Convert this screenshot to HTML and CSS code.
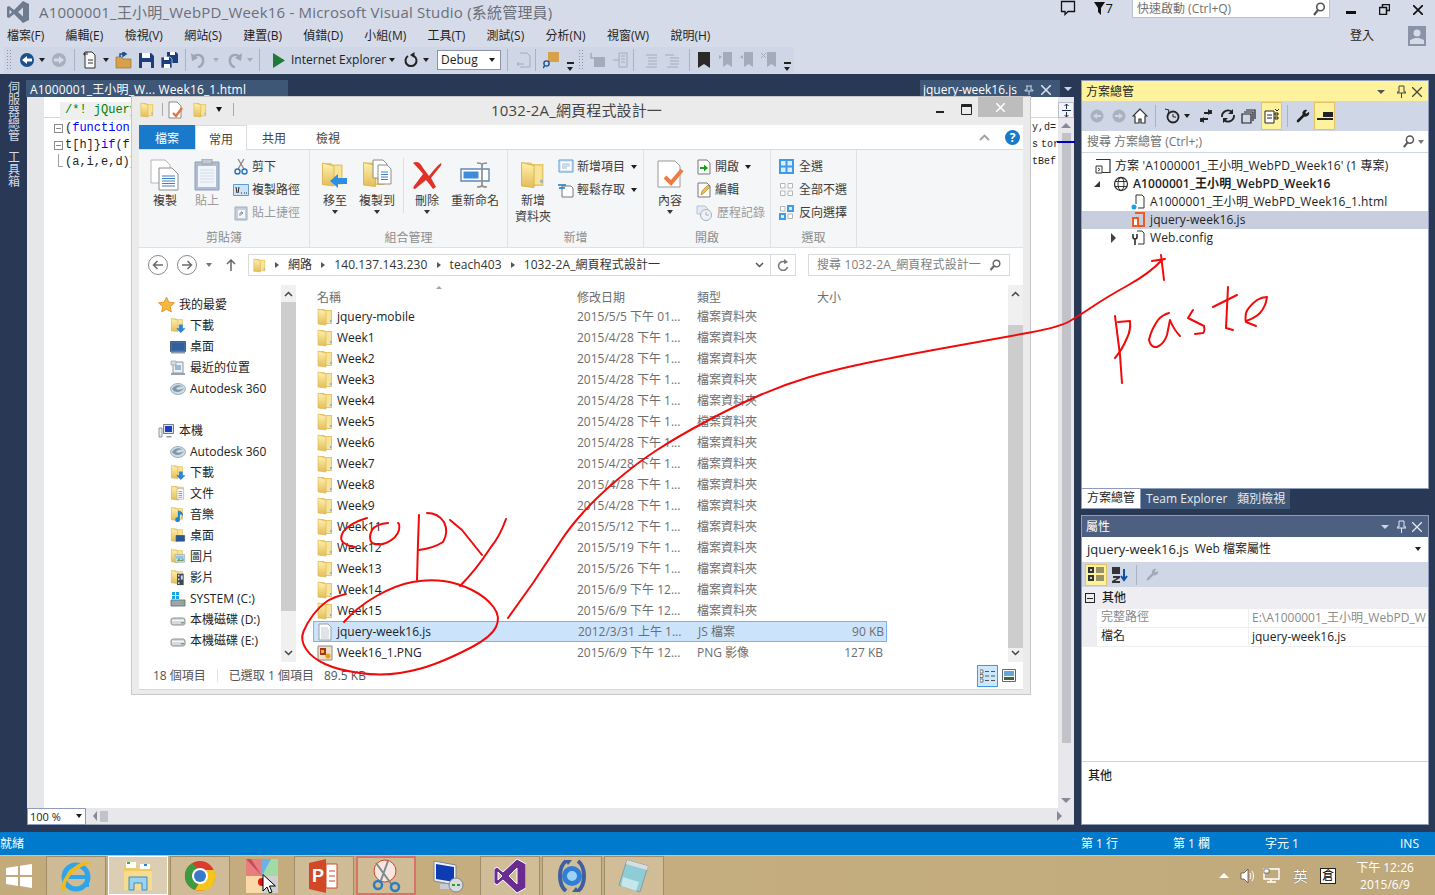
FILE: index.html
```html
<!DOCTYPE html>
<html lang="zh-Hant">
<head>
<meta charset="utf-8">
<title>A1000001_王小明_WebPD_Week16 - Microsoft Visual Studio</title>
<link rel="stylesheet" href="styles.css">
</head>
<body>
<svg class="defs" width="0" height="0" aria-hidden="true">
  <defs>
    <linearGradient id="gf" x1="0" y1="0" x2="0" y2="1"><stop offset="0" stop-color="#fff1ad"/><stop offset="1" stop-color="#e3bd58"/></linearGradient>
    <symbol id="folder" viewBox="0 0 16 18">
      <path d="M1 1h6l1 1h7v14H1z" fill="#e9c766"/>
      <path d="M9 3h5v12H9z" fill="#f8e39a"/>
      <path d="M1 1l8 2v14l-8-1z" fill="url(#gf)" stroke="#d8b24f" stroke-width=".6"/>
      <path d="M13 12h1.500v2H13z" fill="#7fb2d9"/>
    </symbol>
    <symbol id="page" viewBox="0 0 16 18">
      <path d="M2 1h9l3 3v13H2z" fill="#fdfdfd" stroke="#9aa0a8"/>
      <path d="M4 5h7M4 7h8M4 9h8M4 11h8M4 13h8M4 15h8" stroke="#c2c8d2"/>
    </symbol>
    <symbol id="png" viewBox="0 0 16 18">
      <path d="M1 2h14v14H1z" fill="#f0e2c4" stroke="#8a8a8a"/>
      <path d="M3 4h6v7H3z" fill="#a3341e"/>
      <circle cx="11" cy="12" r="2.600" fill="#e0a21b"/>
      <path d="M4 6h3v3H4z" fill="#f1b13a"/>
    </symbol>
    <symbol id="dl" viewBox="0 0 16 18">
      <use href="#folder" width="14" height="17"/>
      <path d="M9 8h4v4h3l-5 5-5-5h3z" fill="#2a86d8"/>
    </symbol>
    <symbol id="desk" viewBox="0 0 16 16">
      <path d="M.5 2.500h15v10H.5z" fill="#3d6ca6" stroke="#4d5d74"/>
      <path d="M2 4h12v7H2z" fill="#2f5f9f"/>
      <path d="M1 13.500h14" stroke="#8d99a8" stroke-width="2"/>
    </symbol>
    <symbol id="recent" viewBox="0 0 16 16">
      <path d="M3 2h10v11H3z" fill="#eef1f4" stroke="#8b96a3"/>
      <path d="M5 5h6v5H5z" fill="#9bb9d4"/>
      <path d="M1 14h14" stroke="#9aa3ad" stroke-width="2"/>
      <path d="M1 1h5v4H1z" fill="#d9dde2" stroke="#8b96a3" stroke-width=".6"/>
    </symbol>
    <symbol id="adesk" viewBox="0 0 16 16">
      <ellipse cx="8" cy="8" rx="7.500" ry="5.500" fill="#cfdbe2" stroke="#9db2bf"/>
      <path d="M2 8c2-4 8-5 11-2-3-1-6 0-7 2 2 1 5 1 8-1-2 4-9 6-12 1z" fill="#7d98a8"/>
    </symbol>
    <symbol id="pc" viewBox="0 0 16 16">
      <path d="M5 1.500h10v9H5z" fill="#dfe6ee" stroke="#6f7d8d"/>
      <path d="M6.500 3h7v6h-7z" fill="#1c3fc2"/>
      <path d="M8 13h5v1.500H8z" fill="#8d99a8"/>
      <path d="M.500 5h3v9h-3z" fill="#e8ebee" stroke="#77818d" stroke-width=".8"/>
    </symbol>
    <symbol id="docf" viewBox="0 0 16 18">
      <use href="#folder" width="15" height="17"/>
      <path d="M7 4h7v11H7z" fill="#fff" stroke="#9aa6b2" stroke-width=".6"/>
      <path d="M8.500 7h4M8.500 9h4M8.500 11h4M8.500 13h4" stroke="#7c96b6"/>
    </symbol>
    <symbol id="musf" viewBox="0 0 16 18">
      <use href="#folder" width="14" height="17"/>
      <path d="M10 5v9a2.500 2.500 0 1 1-2-2V5z" fill="#1e83d0"/>
      <path d="M10 5c2 1 4 3 3 6-1-2-2-2-3-2z" fill="#1e83d0"/>
    </symbol>
    <symbol id="deskf" viewBox="0 0 16 18">
      <use href="#folder" width="14" height="17"/>
      <path d="M6 9h9v6H6z" fill="#23589c" stroke="#3c4a5c" stroke-width=".7"/>
    </symbol>
    <symbol id="picf" viewBox="0 0 16 18">
      <use href="#folder" width="14" height="17"/>
      <path d="M5 7h10v8H5z" fill="#f4f7f8" stroke="#8a97a4" stroke-width=".7"/>
      <path d="M6 8h8v4H6z" fill="#8ec4dd"/><path d="M6 14l3-3 2 2 3-2v3z" fill="#6ea15a"/>
    </symbol>
    <symbol id="vidf" viewBox="0 0 16 18">
      <use href="#folder" width="14" height="17"/>
      <path d="M7 5h7v12H7z" fill="#3f4a55"/>
      <path d="M8 6h1.500v2H8zM8 10h1.500v2H8zM8 14h1.500v2H8zM11 7h2v4h-2z" fill="#cfe3ee"/>
    </symbol>
    <symbol id="sysd" viewBox="0 0 16 16">
      <path d="M1 9h14v6H1z" fill="#9ea7ad" stroke="#5d666d" stroke-width=".8"/>
      <path d="M11 11h3v2h-3z" fill="#72c04c"/>
      <path d="M2 1h3v3H2zM6 1h3v3H6zM2 5h3v3H2zM6 5h3v3H6z" fill="#13a7e8"/>
    </symbol>
    <symbol id="drive" viewBox="0 0 16 16">
      <path d="M1 8c0-2 2-2 3-2h8c1 0 3 0 3 2v3c0 2-2 2-3 2H4c-1 0-3 0-3-2z" fill="#d6dadd" stroke="#6e767d" stroke-width=".8"/>
      <path d="M2 8.500h12" stroke="#f6f7f8"/><path d="M11 10h3v1.500h-3z" fill="#8fa06f"/>
    </symbol>
    <symbol id="star" viewBox="0 0 16 16">
      <path d="M8 1l2.200 4.800 5.300.6-4 3.500 1.100 5.100L8 12.400 3.400 15l1.100-5.100-4-3.500 5.300-.6z" fill="#f6b942" stroke="#e08a23" stroke-width=".8"/>
    </symbol>
    <symbol id="tb-wrench" viewBox="0 0 16 16">
      <path d="M13 1a4 4 0 0 0-5 5L2 12v2h2l6-6a4 4 0 0 0 5-5l-3 2-1-1z" fill="currentColor"/>
    </symbol>
  </defs>
</svg>

<div class="desktop">
  <header class="titlebar">
    <svg class="vs-logo" width="24" height="24" viewBox="0 0 24 24"><path d="M17 1l6 3v16l-6 3-9-9-5 4-2-1V7l2-1 5 4zM17 7.500L12 12l5 4.500zM3.500 9.500v5L6 12z" fill="#6e7b8f"/></svg>
    <span class="app-title">A1000001_王小明_WebPD_Week16 - Microsoft Visual Studio (系統管理員)</span>
    <span class="flex-fill"></span>
    <svg class="ti-comment" width="16" height="16" viewBox="0 0 16 16"><path d="M1.500 1.500h13v10H8l-3 3v-3H1.500z" fill="none" stroke="#111" stroke-width="1.300"/></svg>
    <span class="filter-count"><svg width="11" height="13" viewBox="0 0 11 13"><path d="M0 0h11L7 6v7L4 10V6z" fill="#111"/></svg>7</span>
    <div class="quick"><span>快速啟動 (Ctrl+Q)</span>
      <svg width="14" height="14" viewBox="0 0 14 14"><circle cx="8.500" cy="5" r="3.800" fill="none" stroke="#555" stroke-width="1.600"/><path d="M6 8l-4 5" stroke="#555" stroke-width="2.200"/></svg>
    </div>
    <div class="winbtns">
      <svg width="10" height="10" viewBox="0 0 10 10"><path d="M0 6h10v3H0z" fill="#111"/></svg>
      <svg width="11" height="11" viewBox="0 0 11 11"><path d="M3.500 3V.500h7v6H8M.500 3.500h7v7h-7z" fill="none" stroke="#111" stroke-width="1.500"/></svg>
      <svg width="10" height="10" viewBox="0 0 10 10"><path d="M0 0l10 10M10 0L0 10" stroke="#111" stroke-width="1.700"/></svg>
    </div>
  </header>

  <nav class="menubar">
    <div class="menus">
      <span>檔案(F)</span><span>編輯(E)</span><span>檢視(V)</span><span>網站(S)</span><span>建置(B)</span><span>偵錯(D)</span><span>小組(M)</span><span>工具(T)</span><span>測試(S)</span><span>分析(N)</span><span>視窗(W)</span><span>說明(H)</span>
    </div>
    <span class="signin">登入</span>
    <span class="avatar"><svg width="18" height="20" viewBox="0 0 18 20"><path d="M0 0h18v20H0z" fill="#8a94a8"/><circle cx="9" cy="7" r="3.500" fill="#d6dbe9"/><path d="M2 18v-4l5-2h4l5 2v4z" fill="#d6dbe9"/></svg></span>
  </nav>

  <div class="toolbar">
    <span class="grip"></span>
    <svg class="ml7" width="16" height="16" viewBox="0 0 16 16"><circle cx="8" cy="8" r="7" fill="#1b4f8e"/><path d="M3 8l5-4v2.500h5v3H8V12z" fill="#fff"/></svg>
    <i class="caret ml4"></i>
    <svg class="ml6" width="16" height="16" viewBox="0 0 16 16"><circle cx="8" cy="8" r="7" fill="#a9afbc"/><path d="M13 8L8 4v2.500H3v3h5V12z" fill="#d6dbe9"/></svg>
    <i class="tsep ml7"></i>
    <svg class="ml7" width="16" height="18" viewBox="0 0 16 18"><path d="M3 1h7l3 3v13H3z" fill="#f6f6f6" stroke="#333"/><path d="M1 3h3M2.500 1.500v3M5 1v3" stroke="#333"/><path d="M6 9h5M6 12h5" stroke="#333"/></svg>
    <i class="caret ml5"></i>
    <svg class="ml6" width="17" height="17" viewBox="0 0 17 17"><path d="M1 5h6l1 2h8v9H1z" fill="#d7a04a" stroke="#8a6a2a" stroke-width=".6"/><path d="M5 5V2h5M8 0l3 2-3 2z" fill="none" stroke="#1b4f8e" stroke-width="1.500"/></svg>
    <svg class="ml7" width="15" height="15" viewBox="0 0 15 15"><path d="M0 0h12l3 3v12H0z" fill="#1b3f7e"/><path d="M3 0h8v5H3z" fill="#fff"/><path d="M3 9h9v6H3z" fill="#d6dbe9"/></svg>
    <svg class="ml7" width="17" height="16" viewBox="0 0 17 16"><path d="M6 0h9l2 2v9H6z" fill="#1b3f7e"/><path d="M0 5h9l2 2v9H0z" fill="#1b3f7e" stroke="#d6dbe9" stroke-width=".7"/><path d="M3 5h5v3H3zM3 12h6v4H3zM9 0h5v3H9z" fill="#fff"/></svg>
    <i class="tsep ml7"></i>
    <svg class="ml4" width="16" height="16" viewBox="0 0 16 16"><path d="M3 5c5-4 11-2 10 5-.5 3-3 5-5 5" fill="none" stroke="#9ea6b6" stroke-width="2.400"/><path d="M1 1l1 8 6-3z" fill="#9ea6b6"/></svg>
    <i class="caret caret-off ml7"></i>
    <svg class="ml8" width="16" height="16" viewBox="0 0 16 16"><path d="M13 5C8 1 2 3 3 10c.5 3 3 5 5 5" fill="none" stroke="#9ea6b6" stroke-width="2.400"/><path d="M15 1l-1 8-6-3z" fill="#9ea6b6"/></svg>
    <i class="caret caret-off ml4"></i>
    <i class="tsep ml6"></i>
    <svg class="ml12" width="14" height="15" viewBox="0 0 14 15"><path d="M1 0l12 7.500L1 15z" fill="#1f7a38"/></svg>
    <span class="ie-label">Internet Explorer</span>
    <i class="caret ml4"></i>
    <svg class="ml9" width="14" height="16" viewBox="0 0 14 16"><path d="M4 4a5.500 5.500 0 1 0 6 0" fill="none" stroke="#222" stroke-width="2"/><path d="M10.500 0v6L6 3z" fill="#222"/></svg>
    <i class="caret ml5"></i>
    <span class="debug-box">Debug<i class="caret"></i></span>
    <i class="tsep ml6"></i>
    <svg class="ml8" width="15" height="17" viewBox="0 0 15 17"><path d="M4 1h7l3 3v11H4" fill="none" stroke="#a4acbb"/><path d="M1 12h7M3 10l-2 2 2 2" fill="none" stroke="#a4acbb"/></svg>
    <i class="tsep ml4"></i>
    <svg class="ml7" width="16" height="18" viewBox="0 0 16 18"><path d="M5 1h11v10H5z" fill="#d7a04a"/><circle cx="3.500" cy="12.500" r="2.600" fill="none" stroke="#1b4f8e" stroke-width="1.400"/><path d="M1.500 15l-1.500 2" stroke="#1b4f8e" stroke-width="1.500"/></svg>
    <span class="overflow ml8"></span>
    <span class="grip ml4"></span>
    <svg class="ml6" width="16" height="16" viewBox="0 0 16 16"><path d="M4 5h11v10H4z" fill="#a4acbb"/><path d="M1 1v5h5" fill="none" stroke="#a4acbb" stroke-width="1.500"/></svg>
    <svg class="ml6" width="16" height="16" viewBox="0 0 16 16"><path d="M7 1h8v14H7z" fill="none" stroke="#a4acbb"/><path d="M9 4h4M9 7h4M9 10h4M1 8h6" stroke="#a4acbb"/></svg>
    <i class="tsep ml5"></i>
    <svg class="ml10" width="15" height="15" viewBox="0 0 15 15"><path d="M2 2h11M4 5h9M4 8h9M4 11h9M2 14h11" stroke="#a4acbb"/></svg>
    <svg class="ml6" width="15" height="15" viewBox="0 0 15 15"><path d="M0 2h9M5 5h9M5 8h9M5 11h9M2 14h11" stroke="#a4acbb"/></svg>
    <i class="tsep ml9"></i>
    <svg class="ml8" width="12" height="16" viewBox="0 0 12 16"><path d="M0 0h12v16l-6-4-6 4z" fill="#2a2a2a"/></svg>
    <svg class="ml9" width="14" height="16" viewBox="0 0 14 16"><path d="M4 0h9v15l-4.500-3L4 15z" fill="#a4acbb"/><path d="M0 3l3 2-3 2z" fill="#a4acbb"/></svg>
    <svg class="ml7" width="14" height="16" viewBox="0 0 14 16"><path d="M4 0h9v15l-4.500-3L4 15z" fill="#a4acbb"/><path d="M3 3L0 5l3 2z" fill="#a4acbb"/></svg>
    <svg class="ml7" width="16" height="16" viewBox="0 0 16 16"><path d="M6 0h9v15l-4.500-3L6 15z" fill="#a4acbb"/><path d="M0 1l5 5M5 1L0 6" stroke="#a4acbb"/></svg>
    <span class="overflow ml7"></span>
  </div>

  <main class="workspace">
    <aside class="rail"><span class="rail-a">伺服器總管</span><span class="rail-b">工具箱</span></aside>

    <section class="doc">
      <div class="tabstrip">
        <div class="doc-tab">A1000001_王小明_W... Week16_1.html</div>
        <span class="flex-fill"></span>
        <div class="doc-tab doc-tab-r"><span>jquery-week16.js</span>
          <svg width="10" height="10" viewBox="0 0 10 10"><path d="M2 1h6M3 1v4H1v1h8V5H7V1M5 6v4" stroke="#c9d3e4" fill="none"/></svg>
          <svg width="10" height="10" viewBox="0 0 10 10"><path d="M0 0l10 10M10 0L0 10" stroke="#dfe5ef" stroke-width="1.500"/></svg>
        </div>
        <i class="tab-more"></i>
      </div>
      <div class="editor">
        <div class="editor-main">
          <div class="gutter"></div>
          <div class="code">
            <div class="nav-strip"></div>
            <div class="code-line comment-line"><span class="c-comment">/*! jQuery</span></div>
            <div class="code-line"><i class="fold"></i>(<span class="c-kw">function</span>(</div>
            <div class="code-line"><i class="fold"></i>t[h]}<span class="c-kw">if</span>(f</div>
            <div class="code-line"><i class="fold-end"></i>(a,i,e,d)}</div>
            <div class="code-right"><span>y,d=</span><span>s tor</span><span>tBef</span></div>
          </div>
          <div class="vscroll">
            <div class="split-btn"><svg width="9" height="13" viewBox="0 0 9 13"><path d="M0 6.500h9M4.500 0v5M4.500 8v5M2.500 2l2-2 2 2M2.500 11l2 2 2-2" fill="none" stroke="#1e2f4e"/></svg></div>
            <i class="arr-up"></i>
            <div class="vthumb"><i class="ov-mark"></i></div>
            <span class="flex-fill"></span>
            <i class="arr-down"></i>
          </div>
        </div>
        <div class="editor-bottom">
          <div class="zoom-box">100 %<i class="caret"></i></div>
          <i class="arr-left"></i><i class="hthumb"></i>
          <span class="flex-fill"></span>
          <i class="arr-right"></i>
        </div>
      </div>
    </section>

    <aside class="side">
      <section class="panel sol">
        <div class="panel-title active"><span>方案總管</span><span class="flex-fill"></span>
          <i class="tab-more tm-dark"></i>
          <svg width="9" height="13" viewBox="0 0 9 13"><path d="M2 1h5v6h2v1H0V7h2zM4.500 8v5" fill="none" stroke="#444"/></svg>
          <svg width="10" height="10" viewBox="0 0 10 10"><path d="M0 0l10 10M10 0L0 10" stroke="#444" stroke-width="1.300"/></svg>
        </div>
        <div class="ptools">
          <svg class="pt1" width="14" height="14" viewBox="0 0 14 14"><circle cx="7" cy="7" r="6.500" fill="#aab1bf"/><path d="M3 7l4-3v2h4v2H7v2z" fill="#cfd6e5"/></svg>
          <svg class="pt2" width="14" height="14" viewBox="0 0 14 14"><circle cx="7" cy="7" r="6.500" fill="#aab1bf"/><path d="M11 7L7 4v2H3v2h4v2z" fill="#cfd6e5"/></svg>
          <svg class="pt3" width="16" height="16" viewBox="0 0 16 16"><path d="M8 1L1 8h2v7h4v-4h2v4h4V8h2z" fill="#fff" stroke="#333" stroke-width="1.200"/></svg>
          <i class="tsep pt-sep"></i>
          <svg class="pt4" width="16" height="16" viewBox="0 0 16 16"><circle cx="9" cy="9" r="5.500" fill="none" stroke="#222" stroke-width="1.800"/><path d="M9 6v3h3" stroke="#222" fill="none"/><path d="M1 1l4 1-1 4" fill="none" stroke="#222"/></svg>
          <i class="caret ml4"></i>
          <svg class="ml8" width="16" height="14" viewBox="0 0 16 14"><path d="M13 1v3H6M3 13v-3h7" fill="none" stroke="#222" stroke-width="1.800"/><path d="M10 0v6l4-3zM6 8v6l-4-3z" fill="#222"/></svg>
          <svg class="ml6" width="16" height="16" viewBox="0 0 16 16"><path d="M2 9a6 6 0 0 1 10-5M14 7a6 6 0 0 1-10 5" fill="none" stroke="#222" stroke-width="1.800"/><path d="M13 1v5H8zM3 15v-5h5z" fill="#222"/></svg>
          <svg class="ml5" width="15" height="15" viewBox="0 0 15 15"><path d="M5 1h9v9M3 3h9v9M1 5h9v9H1z" fill="none" stroke="#222" stroke-width="1.200"/></svg>
          <span class="hl-btn hb1"><svg width="16" height="16" viewBox="0 0 16 16"><path d="M1 3h9v12H1z" fill="#fff" stroke="#222"/><path d="M11 1l2 2 2-2M11 5h3v2h-3zM11 9h3v2h-3z" fill="none" stroke="#222"/><path d="M3 7h5M3 10h5" stroke="#222"/></svg></span>
          <i class="tsep ml5"></i>
          <svg class="ml7" width="15" height="15" viewBox="0 0 16 16"><use href="#tb-wrench"/></svg>
          <span class="hl-btn hb2"><svg width="16" height="8" viewBox="0 0 16 8"><path d="M0 6h16v2H0zM6 0h10v5H6z" fill="#222"/></svg></span>
        </div>
        <div class="psearch"><span>搜尋 方案總管 (Ctrl+;)</span><span class="flex-fill"></span>
          <svg width="13" height="13" viewBox="0 0 14 14"><circle cx="8.500" cy="5" r="3.800" fill="none" stroke="#555" stroke-width="1.600"/><path d="M6 8l-4 5" stroke="#555" stroke-width="2.200"/></svg>
          <i class="caret caret-g"></i>
        </div>
        <div class="tree">
          <div class="node l0"><svg width="16" height="16" viewBox="0 0 16 16"><path d="M1 1.500h14v13H1" fill="none" stroke="#333" stroke-width="1.200"/><path d="M1 8h6v7H1z" fill="#fff" stroke="#333"/><path d="M3 10l2 1.500L3 13" fill="none" stroke="#333"/></svg><span>方案 'A1000001_王小明_WebPD_Week16' (1 專案)</span></div>
          <div class="node l1"><i class="tw-open"></i><svg width="16" height="16" viewBox="0 0 16 16"><circle cx="8" cy="8" r="6.500" fill="none" stroke="#333" stroke-width="1.300"/><ellipse cx="8" cy="8" rx="3" ry="6.500" fill="none" stroke="#333"/><path d="M2 5.500h12M2 10.500h12" stroke="#333"/></svg><span class="semibold">A1000001_王小明_WebPD_Week16</span></div>
          <div class="node l2"><svg width="16" height="16" viewBox="0 0 16 16"><path d="M6 1h6l2 2v11H8M6 1v9" fill="none" stroke="#333"/><circle cx="4" cy="13" r="2.500" fill="#1ba1e2"/></svg><span>A1000001_王小明_WebPD_Week16_1.html</span></div>
          <div class="node l2 sel"><svg width="16" height="16" viewBox="0 0 16 16"><path d="M5 1h9v13H5" fill="none" stroke="#f05a22" stroke-width="2"/><path d="M2 5h7v10H2z" fill="#f05a22"/><path d="M4 7h3v6H4z" fill="#fff"/></svg><span>jquery-week16.js</span></div>
          <div class="node l3"><i class="tw-closed"></i><svg width="16" height="16" viewBox="0 0 16 16"><path d="M7 1h5l2 2v11H8" fill="none" stroke="#333"/><path d="M3 4v3a2 2 0 0 0 4 0V4M5 9v6" fill="none" stroke="#222" stroke-width="1.500"/></svg><span>Web.config</span></div>
        </div>
      </section>
      <div class="sidetabs">
        <span class="st st-on">方案總管</span><span class="st">Team Explorer</span><span class="st st-last">類別檢視</span>
      </div>
      <section class="panel props">
        <div class="panel-title inactive"><span>屬性</span><span class="flex-fill"></span>
          <i class="tab-more"></i>
          <svg width="9" height="13" viewBox="0 0 9 13"><path d="M2 1h5v6h2v1H0V7h2zM4.500 8v5" fill="none" stroke="#e3e8f0"/></svg>
          <svg width="10" height="10" viewBox="0 0 10 10"><path d="M0 0l10 10M10 0L0 10" stroke="#e3e8f0" stroke-width="1.300"/></svg>
        </div>
        <div class="pcombo"><span>jquery-week16.js</span><span class="pc-sub">Web 檔案屬性</span><span class="flex-fill"></span><i class="caret"></i></div>
        <div class="ptools ptools-b">
          <span class="hl-btn hb3"><svg width="16" height="15" viewBox="0 0 16 15"><path d="M0 0h6v6H0zM0 8h6v6H0z" fill="#333"/><path d="M2 3h2M3 2v2M2 11h2M3 10v2" stroke="#fff"/><path d="M8 1h8M8 3h8M8 5h8M8 9h8M8 11h8M8 13h8" stroke="#333"/></svg></span>
          <svg class="ml5" width="16" height="16" viewBox="0 0 16 16"><path d="M0 0h8v7H0z" fill="#333"/><path d="M1 9h7v2L3 14h5v2H0v-2l5-3H1z" fill="#333"/><path d="M12 2v10M9 9l3 4 3-4" fill="none" stroke="#0f4fa8" stroke-width="2"/></svg>
          <i class="tsep ml8 ts-tall"></i>
          <svg class="ml8" width="14" height="14" viewBox="0 0 16 16" color="#a4a9b4"><use href="#tb-wrench"/></svg>
        </div>
        <div class="pgroup"><i class="minus"></i><span>其他</span></div>
        <div class="prow muted"><span class="pk">完整路徑</span><span class="pv">E:\A1000001_王小明_WebPD_W</span></div>
        <div class="prow"><span class="pk">檔名</span><span class="pv">jquery-week16.js</span></div>
        <div class="pblank"></div>
        <div class="pdesc">其他</div>
      </section>
    </aside>
  </main>

  <footer class="statusbar">
    <span class="st-ready">就緒</span>
    <span class="st-ln">第 1 行</span><span class="st-cl">第 1 欄</span><span class="st-ch">字元 1</span><span class="st-in">INS</span>
  </footer>

  <div class="taskbar">
    <svg class="winlogo" width="28" height="24" viewBox="0 0 28 24"><path d="M1 4l12-2v9H1zM15 1.700L27 0v11H15zM1 13h12v9L1 20zM15 13h12v11l-12-2z" fill="#fff"/></svg>
    <span class="tk tk1"><svg width="34" height="34" viewBox="0 0 34 34"><circle cx="17" cy="18" r="12" fill="none" stroke="#2ea5e8" stroke-width="5"/><path d="M8 18h20" stroke="#2ea5e8" stroke-width="4"/><path d="M24 26h6" stroke="#2ea5e8" stroke-width="4"/><path d="M28 3C20 2 6 12 2 28c-1 4 2 5 6 2C4 28 9 12 29 5c3-1 3 1 1 6 3-5 3-8-2-8z" fill="#f2b91c"/></svg></span>
    <span class="tk tk2 on"><svg width="32" height="34" viewBox="0 0 32 34"><path d="M2 6h12l2 3h14v18H2z" fill="#eec968"/><path d="M4 3h10v6H4zM18 5h10v5H18z" fill="#fff"/><path d="M5 3h3v2H5z" fill="#35b34a"/><path d="M22 5h3v2h-3z" fill="#2a86d8"/><path d="M2 12h28v19H2z" fill="#f6dc8e"/><path d="M7 18h18v13h-5v-7h-8v7H7z" fill="#9ad2ef" stroke="#3a8dc0"/></svg></span>
    <span class="tk tk3"><svg width="32" height="32" viewBox="0 0 32 32"><circle cx="16" cy="16" r="15" fill="#da3b2e"/><path d="M2 22C-1 14 2 6 9 3l9 13-7 14C7 28 4 26 2 22z" fill="#3d9b3f"/><path d="M30 10c3 7 0 17-8 20-4 1-7 1-11 0l8-14-1-6z" fill="#f5c518"/><circle cx="16" cy="16" r="8" fill="#fff"/><circle cx="16" cy="16" r="6" fill="#3a78c8"/></svg></span>
    <span class="tk tk4"><svg width="32" height="34" viewBox="0 0 32 34"><path d="M0 0h16v17H0z" fill="#e77f7f"/><path d="M16 0h16v17H16z" fill="#a3dba6"/><path d="M0 17h16v17H0z" fill="#fbd9a6"/><path d="M16 17h16v17H16z" fill="#cfcfcf"/><path d="M16 0h9L16 17z" fill="#6db1e8"/><path d="M0 0l5 0 11 17z" fill="#c94a5e"/><circle cx="16" cy="23" r="4" fill="#e41414"/></svg></span>
    <span class="tk tk5"><svg width="30" height="34" viewBox="0 0 30 34"><path d="M17 5h11v24H17z" fill="#fff" stroke="#d24726"/><path d="M0 4l17-4v34L0 30z" fill="#d24726"/><text x="3" y="23" class="ppt-p">P</text><path d="M20 12h6M20 17h6M20 22h6" stroke="#d24726"/></svg></span>
    <span class="tk tk6"><svg width="32" height="34" viewBox="0 0 32 34"><circle cx="15" cy="12" r="11" fill="#f9e7df" stroke="#c8442b"/><path d="M6 4l16 22M18 2L10 24" stroke="#7e8a90" stroke-width="2"/><circle cx="8" cy="26" r="4" fill="none" stroke="#2f7dbb" stroke-width="2.500"/><circle cx="25" cy="28" r="4" fill="none" stroke="#2f7dbb" stroke-width="2.500"/></svg></span>
    <span class="tk tk7"><svg width="32" height="34" viewBox="0 0 32 34"><path d="M2 2l22 4v20L2 22z" fill="#eef1f5" stroke="#7b8896"/><path d="M4 5l18 3v15L4 20z" fill="#0d3bb3"/><path d="M8 25h12v5H8z" fill="#c7ccd2"/><circle cx="24" cy="26" r="7" fill="#d9dcdf" stroke="#808488"/><path d="M20 26h3M25 26h3" stroke="#2e9a3c" stroke-width="2"/></svg></span>
    <span class="tk tk8"><svg width="32" height="34" viewBox="0 0 32 34"><path d="M23 0l9 5v24l-9 5-14-13-6 5-3-2V10l3-2 6 5zM23 9l-8 8 8 8zM4 13v8l4-4z" fill="#6a2c91" stroke="#fff"/></svg></span>
    <span class="tk tk9"><svg width="32" height="34" viewBox="0 0 32 34"><path d="M10 2C2 8 2 26 10 32" fill="none" stroke="#3f5f9f" stroke-width="4"/><path d="M22 2c8 6 8 24 0 30" fill="none" stroke="#3f5f9f" stroke-width="4"/><circle cx="16" cy="17" r="10" fill="#2f7ed8"/><circle cx="16" cy="17" r="5" fill="#9fd3f5"/><path d="M9 1l7 0-4 5zM23 33l-7 0 4-5z" fill="#3f5f9f"/></svg></span>
    <span class="tk tk10"><svg width="32" height="34" viewBox="0 0 32 34"><path d="M9 1l21 6-8 26-21-7z" fill="#8fcdd6" stroke="#8a9aa0"/><path d="M9 1l21 6-1 4L8 5z" fill="#d9dde0"/><path d="M5 18l16 5-3 9-15-5z" fill="#c5e6ea"/></svg></span>
    <span class="flex-fill"></span>
    <div class="tray">
      <i class="tray-up"></i>
      <svg class="ml11" width="16" height="16" viewBox="0 0 16 16"><path d="M1 5h3l4-4v14l-4-4H1z" fill="#fff" stroke="#444" stroke-width=".7"/><path d="M10 5c1 2 1 4 0 6M12 3c2 3 2 7 0 10" fill="none" stroke="#fff"/></svg>
      <svg class="ml7" width="17" height="16" viewBox="0 0 17 16"><path d="M1 1h15v10H1z" fill="none" stroke="#fff" stroke-width="1.400"/><path d="M1 1h5v4H1z" fill="#fff" stroke="#333" stroke-width=".6"/><path d="M8 11v3M4 14h9" stroke="#fff" stroke-width="1.400"/></svg>
      <span class="ime">英</span>
      <span class="ime-box">倉</span>
      <span class="clock"><span>下午 12:26</span><span>2015/6/9</span></span>
    </div>
  </div>

  <!-- Floating File Explorer window -->
  <div class="explorer">
    <div class="ex-title">
      <svg class="q1" width="14" height="18"><use href="#folder" width="14" height="18"/></svg>
      <i class="q-sep"></i>
      <svg class="q2" width="16" height="18" viewBox="0 0 16 18"><path d="M1 1h8l4 4v12H1z" fill="#fff" stroke="#8a8a8a"/><path d="M5 12l3 3 6-8" fill="none" stroke="#e8703a" stroke-width="2.400"/></svg>
      <svg class="q3" width="14" height="18"><use href="#folder" width="14" height="18"/></svg>
      <i class="q-drop"></i>
      <i class="q-sep q-sep2"></i>
      <span class="ex-name">1032-2A_網頁程式設計一</span>
      <div class="ex-win">
        <svg width="10" height="10" viewBox="0 0 10 10"><path d="M1 7h8v2H1z" fill="#222"/></svg>
        <svg width="11" height="11" viewBox="0 0 11 11"><path d="M.5.500h10v10H.500z" fill="none" stroke="#222"/><path d="M1 2h9" stroke="#222" stroke-width="2"/></svg>
        <span class="ex-close"><svg width="9" height="9" viewBox="0 0 9 9"><path d="M0 0l9 9M9 0L0 9" stroke="#fff" stroke-width="1.500"/></svg></span>
      </div>
    </div>
    <div class="ex-inner">
      <div class="ex-tabs">
        <span class="ext ext-file">檔案</span><span class="ext ext-on">常用</span><span class="ext ext-a">共用</span><span class="ext ext-b">檢視</span>
        <span class="flex-fill"></span>
        <svg class="ex-chev" width="11" height="7" viewBox="0 0 11 7"><path d="M1 6l4.500-4.500L10 6" fill="none" stroke="#a0a0a0" stroke-width="1.800"/></svg>
        <span class="ex-help">?</span>
      </div>
      <div class="ribbon">
        <div class="rg rg1">
          <div class="rg-body">
            <div class="big"><svg width="30" height="32" viewBox="0 0 30 32"><path d="M1 1h14l5 5v18H1z" fill="#fff" stroke="#b5b5b5"/><path d="M9 9h13l6 6v16H9z" fill="#fff" stroke="#8c8c8c"/><path d="M12 17h13M12 19.500h13M12 22h13M12 24.500h13M12 27h13" stroke="#3f7fc5"/></svg><span>複製</span></div>
            <div class="big off"><svg width="28" height="32" viewBox="0 0 28 32"><path d="M2 3h24v28H2z" fill="#aebcd4" stroke="#8e9dba"/><path d="M9 0h10v5H9z" fill="#c4c9d1" stroke="#9aa2ad"/><path d="M5 7h18v21H5z" fill="#f1f4f9"/><path d="M7 11h14M7 14h14M7 17h14M7 20h14M7 23h14" stroke="#d3dceb"/></svg><span>貼上</span></div>
            <div class="smalls s1">
              <div class="sm"><svg width="16" height="16" viewBox="0 0 16 16"><path d="M5 0l6 10M11 0L5 10" stroke="#888" stroke-width="1.300"/><circle cx="4.500" cy="12.500" r="2.500" fill="none" stroke="#2672bc" stroke-width="1.400"/><circle cx="11.500" cy="12.500" r="2.500" fill="none" stroke="#2672bc" stroke-width="1.400"/></svg><span>剪下</span></div>
              <div class="sm"><svg width="16" height="14" viewBox="0 0 16 14"><path d="M.500 1.500h15v11H.500z" fill="#cfe3f7" stroke="#5d9bd6"/><path d="M3 4l1 6M6 4L5 10M8 10h1M11 10h1M13 10h1" stroke="#222"/></svg><span>複製路徑</span></div>
              <div class="sm off"><svg width="16" height="16" viewBox="0 0 16 16"><path d="M2 2h12v13H2z" fill="#c5cfdc" stroke="#9fadc0"/><path d="M5 5h7v8H5z" fill="#f5f6f7"/><path d="M7 11V8h3M8 9.500L10 8l-2-1.500" fill="none" stroke="#7f8fa5"/></svg><span>貼上捷徑</span></div>
            </div>
          </div>
          <div class="rg-label">剪貼簿</div>
        </div>
        <div class="rg rg2">
          <div class="rg-body">
            <div class="big"><svg width="28" height="32" viewBox="0 0 28 32"><use href="#folder" width="23" height="31"/><path d="M9 22l8-7v4h9v6h-9v4z" fill="#2c8fe3"/></svg><span>移至</span><i class="drop"></i></div>
            <div class="big"><svg width="30" height="32" viewBox="0 0 30 32"><use href="#folder" width="24" height="31"/><path d="M11 1h10l4 4v14H11z" fill="#fff" stroke="#8c8c8c"/><path d="M16 6h9l4 4v15H16z" fill="#fff" stroke="#8c8c8c"/><path d="M19 13h7M19 15.500h7M19 18h7M19 20.500h7" stroke="#3f7fc5"/></svg><span>複製到</span><i class="drop"></i></div>
            <i class="rg-sep"></i>
            <div class="big b-del"><svg width="32" height="30" viewBox="0 0 32 30"><path d="M2 3c4-2 7-1 10 5l6 8C22 11 26 6 30 3c1 1 0 3-2 5l-8 10 5 9-3 2c-3-4-5-7-7-9L4 29c-2 0-2-2-1-3l9-12C8 9 5 6 2 3z" fill="#e03126"/></svg><span>刪除</span><i class="drop"></i></div>
            <div class="big b-ren"><svg width="30" height="30" viewBox="0 0 30 30"><path d="M1 9h28v12H1z" fill="#fff" stroke="#5d89b8" stroke-width="1.400"/><path d="M3.500 11.500h15v7h-15z" fill="#3f8dd8"/><path d="M17 3c3 0 5 0 5 2v20c0 2-2 2-5 2M27 3c-3 0-5 0-5 2v20c0 2 2 2 5 2" fill="none" stroke="#8e8e8e" stroke-width="1.700"/></svg><span>重新命名</span></div>
          </div>
          <div class="rg-label">組合管理</div>
        </div>
        <div class="rg rg3">
          <div class="rg-body">
            <div class="big"><svg width="26" height="32" viewBox="0 0 26 32"><use href="#folder" width="25" height="32"/></svg><span>新增<br>資料夾</span></div>
            <div class="smalls s3">
              <div class="sm"><svg width="16" height="16" viewBox="0 0 16 16"><path d="M1 1h14v12H1z" fill="#d9e9f8" stroke="#5d9bd6"/><path d="M3 3h10v8H3z" fill="#fff"/><path d="M4 5h8M4 7h8M4 9h5" stroke="#9cb7d2"/></svg><span>新增項目</span><i class="caret"></i></div>
              <div class="sm"><svg width="16" height="16" viewBox="0 0 16 16"><path d="M4 4h9l2 2v9H4z" fill="#fff" stroke="#777"/><path d="M0 3h8M1 6h6" stroke="#1d76c9" stroke-width="1.300"/></svg><span>輕鬆存取</span><i class="caret"></i></div>
            </div>
          </div>
          <div class="rg-label">新增</div>
        </div>
        <div class="rg rg4">
          <div class="rg-body">
            <div class="big"><svg width="28" height="30" viewBox="0 0 28 30"><path d="M2 1h17l5 5v21H2z" fill="#fff" stroke="#999"/><path d="M9 17l6 6 11-13" fill="none" stroke="#ef7b44" stroke-width="4"/></svg><span>內容</span><i class="drop"></i></div>
            <div class="smalls s4">
              <div class="sm"><svg width="16" height="16" viewBox="0 0 16 16"><path d="M2 1h9l3 3v11H2z" fill="#fff" stroke="#777"/><path d="M4 8h4V5.500L12 9l-4 3.500V10H4z" fill="#18a018"/></svg><span>開啟</span><i class="caret"></i></div>
              <div class="sm"><svg width="16" height="16" viewBox="0 0 16 16"><path d="M2 1h9l3 3v11H2z" fill="#fff" stroke="#777"/><path d="M5 13l1-4 6-6 2 2-6 6z" fill="#f1c04e" stroke="#9a6d1f" stroke-width=".6"/></svg><span>編輯</span></div>
              <div class="sm off"><svg width="18" height="16" viewBox="0 0 18 16"><path d="M1 1h8l3 3v5H1z" fill="#e5eaf2" stroke="#b7c2d2"/><circle cx="10" cy="10" r="5.500" fill="#eef1f6" stroke="#a4b0c2"/><path d="M10 7v3h3" fill="none" stroke="#a4b0c2"/></svg><span>歷程記錄</span></div>
            </div>
          </div>
          <div class="rg-label">開啟</div>
        </div>
        <div class="rg rg5">
          <div class="rg-body">
            <div class="smalls s5">
              <div class="sm"><svg width="15" height="15" viewBox="0 0 15 15"><path d="M0 0h15v15H0z" fill="#3f9be8"/><path d="M2 2h4.500v4.500H2zM8.500 2H13v4.500H8.500zM2 8.500h4.500V13H2zM8.500 8.500H13V13H8.500z" fill="#dcecfb"/></svg><span>全選</span></div>
              <div class="sm"><svg width="15" height="15" viewBox="0 0 15 15"><path d="M1.500 1.500h4.500v4.500H1.500zM9 1.500h4.500v4.500H9zM1.500 9h4.500v4.500H1.500zM9 9h4.500v4.500H9z" fill="#fff" stroke="#b5b5b5"/></svg><span>全部不選</span></div>
              <div class="sm"><svg width="15" height="15" viewBox="0 0 15 15"><path d="M1.500 1.500h4.500v4.500H1.500z" fill="#fff" stroke="#b5b5b5"/><path d="M8 0h7v7H8zM0 8h7v7H0z" fill="#3f9be8"/><path d="M10 2h3v3h-3zM2 10h3v3H2z" fill="#dcecfb"/><path d="M9 9h4.500v4.500H9z" fill="#fff" stroke="#b5b5b5"/></svg><span>反向選擇</span></div>
            </div>
          </div>
          <div class="rg-label">選取</div>
        </div>
      </div>

      <div class="addr">
        <span class="circ"><svg width="12" height="10" viewBox="0 0 12 10"><path d="M11 5H2M5.500 1L1.500 5l4 4" fill="none" stroke="#6a6a6a" stroke-width="1.500"/></svg></span>
        <span class="circ c2"><svg width="12" height="10" viewBox="0 0 12 10"><path d="M1 5h9M6.500 1l4 4-4 4" fill="none" stroke="#6a6a6a" stroke-width="1.500"/></svg></span>
        <i class="caret caret-g cg-a"></i>
        <svg class="up" width="10" height="12" viewBox="0 0 10 12"><path d="M5 12V1M1 5l4-4 4 4" fill="none" stroke="#666" stroke-width="1.500"/></svg>
        <div class="addrbox">
          <svg width="13" height="17"><use href="#folder" width="13" height="17"/></svg>
          <i class="crumb"></i><span>網路</span><i class="crumb"></i><span>140.137.143.230</span><i class="crumb"></i><span>teach403</span><i class="crumb"></i><span>1032-2A_網頁程式設計一</span>
          <span class="flex-fill"></span>
          <svg class="ab-down" width="9" height="6" viewBox="0 0 9 6"><path d="M1 1l3.500 3.500L8 1" fill="none" stroke="#555" stroke-width="1.500"/></svg>
          <span class="ab-refresh"><svg width="12" height="12" viewBox="0 0 12 12"><path d="M9.500 4A4.500 4.500 0 1 0 10.500 8" fill="none" stroke="#777" stroke-width="1.500"/><path d="M7 0v5l4-2z" fill="#777"/></svg></span>
        </div>
        <div class="searchbox"><span>搜尋 1032-2A_網頁程式設計一</span><span class="flex-fill"></span>
          <svg width="12" height="12" viewBox="0 0 12 12"><circle cx="7.500" cy="4.500" r="3.300" fill="none" stroke="#666" stroke-width="1.400"/><path d="M5 7L1.500 11" stroke="#666" stroke-width="2"/></svg>
        </div>
      </div>

      <div class="ex-body">
        <div class="navpane">
          <div class="navlist">
            <div class="nv top"><svg width="17" height="17"><use href="#star" width="17" height="17"/></svg><span>我的最愛</span></div>
            <div class="nv"><svg width="16" height="17"><use href="#dl" width="16" height="17"/></svg><span>下載</span></div>
            <div class="nv"><svg width="16" height="16"><use href="#desk" width="16" height="16"/></svg><span>桌面</span></div>
            <div class="nv"><svg width="16" height="16"><use href="#recent" width="16" height="16"/></svg><span>最近的位置</span></div>
            <div class="nv"><svg width="16" height="16"><use href="#adesk" width="16" height="16"/></svg><span>Autodesk 360</span></div>
            <div class="nv-blank"></div>
            <div class="nv top"><svg width="17" height="16"><use href="#pc" width="17" height="16"/></svg><span>本機</span></div>
            <div class="nv"><svg width="16" height="16"><use href="#adesk" width="16" height="16"/></svg><span>Autodesk 360</span></div>
            <div class="nv"><svg width="16" height="17"><use href="#dl" width="16" height="17"/></svg><span>下載</span></div>
            <div class="nv"><svg width="16" height="17"><use href="#docf" width="16" height="17"/></svg><span>文件</span></div>
            <div class="nv"><svg width="16" height="17"><use href="#musf" width="16" height="17"/></svg><span>音樂</span></div>
            <div class="nv"><svg width="16" height="17"><use href="#deskf" width="16" height="17"/></svg><span>桌面</span></div>
            <div class="nv"><svg width="16" height="17"><use href="#picf" width="16" height="17"/></svg><span>圖片</span></div>
            <div class="nv"><svg width="16" height="17"><use href="#vidf" width="16" height="17"/></svg><span>影片</span></div>
            <div class="nv"><svg width="16" height="16"><use href="#sysd" width="16" height="16"/></svg><span>SYSTEM (C:)</span></div>
            <div class="nv"><svg width="16" height="16"><use href="#drive" width="16" height="16"/></svg><span>本機磁碟 (D:)</span></div>
            <div class="nv"><svg width="16" height="16"><use href="#drive" width="16" height="16"/></svg><span>本機磁碟 (E:)</span></div>
          </div>
          <div class="xscroll navscroll">
            <svg width="9" height="6" viewBox="0 0 9 6"><path d="M1 5l3.500-3.500L8 5" fill="none" stroke="#444" stroke-width="1.500"/></svg>
            <div class="xthumb"></div>
            <svg width="9" height="6" viewBox="0 0 9 6"><path d="M1 1l3.500 3.500L8 1" fill="none" stroke="#444" stroke-width="1.500"/></svg>
          </div>
        </div>
        <div class="listpane">
          <div class="list">
            <div class="lhead"><span class="c-name">名稱</span><span class="c-date">修改日期</span><span class="c-type">類型</span><span class="c-size">大小</span><i class="sort"></i></div>
            <div class="lr"><span class="c-name"><svg width="16" height="18"><use href="#folder" width="16" height="18"/></svg>jquery-mobile</span><span class="c-date">2015/5/5 下午 01...</span><span class="c-type">檔案資料夾</span></div>
            <div class="lr"><span class="c-name"><svg width="16" height="18"><use href="#folder" width="16" height="18"/></svg>Week1</span><span class="c-date">2015/4/28 下午 1...</span><span class="c-type">檔案資料夾</span></div>
            <div class="lr"><span class="c-name"><svg width="16" height="18"><use href="#folder" width="16" height="18"/></svg>Week2</span><span class="c-date">2015/4/28 下午 1...</span><span class="c-type">檔案資料夾</span></div>
            <div class="lr"><span class="c-name"><svg width="16" height="18"><use href="#folder" width="16" height="18"/></svg>Week3</span><span class="c-date">2015/4/28 下午 1...</span><span class="c-type">檔案資料夾</span></div>
            <div class="lr"><span class="c-name"><svg width="16" height="18"><use href="#folder" width="16" height="18"/></svg>Week4</span><span class="c-date">2015/4/28 下午 1...</span><span class="c-type">檔案資料夾</span></div>
            <div class="lr"><span class="c-name"><svg width="16" height="18"><use href="#folder" width="16" height="18"/></svg>Week5</span><span class="c-date">2015/4/28 下午 1...</span><span class="c-type">檔案資料夾</span></div>
            <div class="lr"><span class="c-name"><svg width="16" height="18"><use href="#folder" width="16" height="18"/></svg>Week6</span><span class="c-date">2015/4/28 下午 1...</span><span class="c-type">檔案資料夾</span></div>
            <div class="lr"><span class="c-name"><svg width="16" height="18"><use href="#folder" width="16" height="18"/></svg>Week7</span><span class="c-date">2015/4/28 下午 1...</span><span class="c-type">檔案資料夾</span></div>
            <div class="lr"><span class="c-name"><svg width="16" height="18"><use href="#folder" width="16" height="18"/></svg>Week8</span><span class="c-date">2015/4/28 下午 1...</span><span class="c-type">檔案資料夾</span></div>
            <div class="lr"><span class="c-name"><svg width="16" height="18"><use href="#folder" width="16" height="18"/></svg>Week9</span><span class="c-date">2015/4/28 下午 1...</span><span class="c-type">檔案資料夾</span></div>
            <div class="lr"><span class="c-name"><svg width="16" height="18"><use href="#folder" width="16" height="18"/></svg>Week11</span><span class="c-date">2015/5/12 下午 1...</span><span class="c-type">檔案資料夾</span></div>
            <div class="lr"><span class="c-name"><svg width="16" height="18"><use href="#folder" width="16" height="18"/></svg>Week12</span><span class="c-date">2015/5/19 下午 1...</span><span class="c-type">檔案資料夾</span></div>
            <div class="lr"><span class="c-name"><svg width="16" height="18"><use href="#folder" width="16" height="18"/></svg>Week13</span><span class="c-date">2015/5/26 下午 1...</span><span class="c-type">檔案資料夾</span></div>
            <div class="lr"><span class="c-name"><svg width="16" height="18"><use href="#folder" width="16" height="18"/></svg>Week14</span><span class="c-date">2015/6/9 下午 12...</span><span class="c-type">檔案資料夾</span></div>
            <div class="lr"><span class="c-name"><svg width="16" height="18"><use href="#folder" width="16" height="18"/></svg>Week15</span><span class="c-date">2015/6/9 下午 12...</span><span class="c-type">檔案資料夾</span></div>
            <div class="lr lr-sel"><span class="c-name"><svg width="16" height="18"><use href="#page" width="16" height="18"/></svg>jquery-week16.js</span><span class="c-date">2012/3/31 上午 1...</span><span class="c-type">JS 檔案</span><span class="c-size">90 KB</span></div>
            <div class="lr"><span class="c-name"><svg width="16" height="18"><use href="#png" width="16" height="18"/></svg>Week16_1.PNG</span><span class="c-date">2015/6/9 下午 12...</span><span class="c-type">PNG 影像</span><span class="c-size">127 KB</span></div>
          </div>
          <div class="xscroll listscroll">
            <svg width="9" height="6" viewBox="0 0 9 6"><path d="M1 5l3.500-3.500L8 5" fill="none" stroke="#444" stroke-width="1.500"/></svg>
            <div class="xthumb lthumb"></div>
            <svg width="9" height="6" viewBox="0 0 9 6"><path d="M1 1l3.500 3.500L8 1" fill="none" stroke="#444" stroke-width="1.500"/></svg>
          </div>
        </div>
      </div>

      <div class="ex-status">
        <span>18 個項目</span><i class="es-sep"></i><span>已選取 1 個項目</span><span class="es-size">89.5 KB</span>
        <span class="flex-fill"></span>
        <span class="vbtn vbtn-on"><svg width="15" height="14" viewBox="0 0 15 14"><path d="M0 1h3v3H0zM0 5.500h3v3H0zM0 10h3v3H0z" fill="#fff" stroke="#444" stroke-width=".7"/><path d="M5 2.500h4M11 2.500h4M5 7h4M11 7h4M5 11.500h4M11 11.500h4" stroke="#555"/></svg></span>
        <span class="vbtn"><svg width="14" height="13" viewBox="0 0 14 13"><path d="M.5.500h13v12H.500z" fill="#fff" stroke="#666"/><path d="M2 2h10v5H2z" fill="#5fa8d8"/><path d="M2 8h10v3H2z" fill="#3a6a3a"/></svg></span>
      </div>
    </div>
  </div>

  <!-- Freehand red pen annotations over the screen -->
  <svg class="ink" width="1435" height="895" viewBox="0 0 1435 895">
    <path d="M367 518Q350 523 343 532Q339 540 344 543Q350 547 355 547"/>
    <path d="M388 523Q376 524 372 530Q368 538 372 543Q378 546 386 543Q397 538 399 530Q400 524 398 523"/>
    <path d="M419 515L418 543L417 580"/>
    <path d="M427 513Q438 513 444 522Q449 532 443 542Q434 548 419 550"/>
    <path d="M450 520L462 530L482 555"/>
    <path d="M506 519Q500 536 491 547Q476 570 460 586"/>
    <path d="M346 594Q333 597 326 602Q319 607 313 615Q307 623 303.500 631.500Q300 640 306 649Q312 658 325 664Q338 670 359.500 673Q381 676 400 673Q419 670 436 663.500Q453 657 472 647Q491 637 496 627Q501 617 493.500 607Q486 597 472 590Q458 583 443.500 581Q429 579 412.500 582Q396 585 376.500 596Q357 607 344 622"/>
    <path d="M508 618L533 583Q553 553 561.500 540Q570 527 583.500 512Q597 497 617 480Q637 463 657 450Q677 437 705 422Q733 407 758 396Q783 385 808 377.500Q833 370 866.500 363Q900 356 950 347Q1000 338 1030 332.500Q1060 327 1070 321Q1080 315 1093.500 306Q1107 297 1128.500 285Q1150 273 1162 260"/>
    <path d="M1152 261L1165 259M1161 255L1164 280"/>
    <path d="M1115 316L1120 355L1122 383"/>
    <path d="M1118 322L1130 321Q1131 330 1127 338Q1122 350 1115 358"/>
    <path d="M1169 313Q1162 315 1158 320Q1151 330 1149 340Q1151 348 1157 347Q1164 344 1167 335L1170 320Q1174 330 1180 336"/>
    <path d="M1193 310L1188 318L1204 326Q1205 332 1203 333L1195 334"/>
    <path d="M1228 287L1226 328L1233 330"/>
    <path d="M1213 307L1237 295"/>
    <path d="M1246 321Q1255 318 1260 313Q1266 306 1267 297Q1262 297 1257 300Q1248 307 1246 313Q1245 320 1246 322L1256 326"/>
    <path class="cursor" d="M263 875v16l4-4 2.500 6 2.500-1-2.500-6h5.500z"/>
  </svg>
</div>
</body>
</html>
```

FILE: styles.css
```css
* { box-sizing: border-box; }
html, body { margin: 0; padding: 0; }
body {
  font-family: "Open Sans", "Noto Sans CJK TC", sans-serif;
  font-size: 12px;
  line-height: 16px;
  color: #1e1e1e;
}
i { display: inline-block; font-style: normal; flex: none; }
svg { flex: none; display: block; }
.defs { position: absolute; }
.flex-fill { flex: 1; }
.desktop {
  position: relative;
  width: 1435px;
  height: 895px;
  overflow: hidden;
  display: flex;
  flex-direction: column;
  background: #d6dbe9;
}

.ml1 { margin-left: 1px; } .ml4 { margin-left: 4px; } .ml5 { margin-left: 5px; } .ml6 { margin-left: 6px; }
.ml7 { margin-left: 7px; } .ml8 { margin-left: 8px; } .ml9 { margin-left: 9px; } .ml10 { margin-left: 10px; }
.ml11 { margin-left: 11px; } .ml12 { margin-left: 12px; }

/* Title bar */
.titlebar { height: 24px; display: flex; align-items: flex-start; padding-left: 6px; flex: none; }
.app-title { margin-left: 9px; font-size: 15px; letter-spacing: .2px; line-height: 24px; color: #6b6f78; white-space: nowrap; }
.filter-count { display: flex; align-items: center; margin-left: 18px; font-size: 13px; line-height: 14px; color: #111; gap: 1px; margin-top: 1px; }
.quick { width: 198px; height: 18px; margin-left: 19px; background: #fff; border: 1px solid #b9c0d2; border-top: 0; display: flex; align-items: center; justify-content: space-between; padding: 0 3px 0 4px; color: #717171; }
.winbtns { width: 105px; display: flex; align-items: center; justify-content: space-between; padding: 4px 12px 0 16px; }

/* Menu bar */
.menubar { height: 22px; display: flex; align-items: center; padding: 2px 0 0 7px; flex: none; }
.menus { display: flex; gap: 21.300px; flex: 1; color: #1e1e1e; }
.signin { margin-right: 34px; }
.avatar { margin-right: 9px; }

/* Toolbar */
.toolbar { height: 26px; margin: 1px 0 0 4px; width: 790px; display: flex; align-items: center; flex: none; padding-left: 2px; background: #cfd6e5; }
.grip { width: 6px; height: 22px; flex: none; background-image: radial-gradient(#8a93a8 1px, transparent 1px); background-size: 3px 3px; }
.caret { width: 0; height: 0; border-left: 3.500px solid transparent; border-right: 3.500px solid transparent; border-top: 4px solid #1e1e1e; }
.caret-off { border-top-color: #a4acbb; }
.caret-g { border-top-color: #777; }
.tsep { width: 1px; height: 22px; background: #a9b1c2; }
.ie-label { margin-left: 5px; white-space: nowrap; width: 94px; flex: none; }
.debug-box { width: 64px; height: 20px; margin-left: 8px; border: 1px solid #8a93a8; background: #fff; display: flex; align-items: center; justify-content: space-between; padding: 0 5px 0 3px; flex: none; }
.overflow { width: 7px; height: 9px; margin-top: 12px; flex: none; border-top: 2px solid #222; position: relative; }
.overflow::after { content: ""; position: absolute; left: 0; top: 3px; border-left: 3.500px solid transparent; border-right: 3.500px solid transparent; border-top: 4px solid #222; }

/* Workspace */
.workspace { height: 758px; margin-top: 1px; flex: none; padding: 6px 0 7px; background: #293955; display: flex; }
.rail { width: 26px; flex: none; display: flex; flex-direction: column; color: #d6dbe9; font-size: 12px; line-height: 13px; align-items: center; padding-top: 1px; }
.rail-a, .rail-b { writing-mode: vertical-rl; }
.rail-b { margin-top: 10px; }

.doc { width: 1048px; flex: none; display: flex; flex-direction: column; }
.tabstrip { height: 17px; display: flex; flex: none; align-items: stretch; }
.doc-tab { width: 262px; background: #3e5777; color: #fff; font-size: 12px; letter-spacing: .15px; line-height: 20px; padding-left: 4px; white-space: nowrap; }
.doc-tab-r { width: 140px; display: flex; align-items: center; gap: 7px; line-height: 16px; padding: 2px 0 0 3px; letter-spacing: 0; }
.tab-more { width: 0; height: 0; align-self: center; margin: 0 2px 0 4px; border-left: 4px solid transparent; border-right: 4px solid transparent; border-top: 4px solid #cdd5e3; }
.tm-dark { border-top-color: #555; margin: 0 6px 0 0; }
.editor { flex: 1; display: flex; flex-direction: column; background: #fff; margin-left: 1px; }
.editor-main { flex: 1; display: flex; min-height: 0; }
.gutter { width: 17px; background: #e6e7e8; flex: none; }
.code { position: relative; flex: 1; font-family: "Liberation Mono", monospace; font-size: 12px; line-height: 17px; min-width: 0; }
.nav-strip { height: 21px; width: 100%; background: #fff; border-bottom: 1px solid #cfd6e5; position: absolute; top: 0; left: 0; }
.code-line { padding-left: 21px; position: relative; white-space: pre; top: 5px; }
.comment-line { background: #eef0f0; margin-left: 16px; padding-left: 5px; width: 90px; height: 18px; }
.c-comment { color: #008000; }
.c-kw { color: #0000ff; }
.fold { position: absolute; left: 10px; top: 4px; width: 9px; height: 9px; border: 1px solid #8a8a8a; background: linear-gradient(#8a8a8a, #8a8a8a) center / 5px 1px no-repeat; }
.fold-end { position: absolute; left: 14px; top: 0; width: 5px; height: 13px; border-left: 1px solid #a0a0a0; border-bottom: 1px solid #a0a0a0; }
.code-right { position: absolute; right: 0; top: 22px; display: flex; flex-direction: column; width: 26px; white-space: pre; font-size: 10px; word-spacing: -3px; }
.vscroll { width: 16px; flex: none; background: #e8e8ec; display: flex; flex-direction: column; align-items: center; position: relative; }
.split-btn { width: 16px; height: 16px; margin-top: 5px; background: #f3f4f7; border: 1px solid #b8c0cf; display: flex; align-items: center; justify-content: center; flex: none; }
.arr-up { margin-top: 5px; width: 0; height: 0; border-left: 5px solid transparent; border-right: 5px solid transparent; border-bottom: 5px solid #868999; }
.arr-down { margin-bottom: 5px; width: 0; height: 0; border-left: 5px solid transparent; border-right: 5px solid transparent; border-top: 5px solid #868999; }
.vthumb { width: 9px; height: 610px; margin-top: 5px; background: #c2c3c9; flex: none; }
.ov-mark { position: absolute; left: -1px; right: -1px; top: 44px; height: 2px; background: #0000c0; }
.editor-bottom { height: 17px; flex: none; background: #e8e8ec; border-bottom: 1px solid #9ba7b7; display: flex; align-items: center; }
.zoom-box { width: 59px; height: 17px; background: #fff; border: 1px solid #8e9bbc; font-size: 11px; line-height: 15px; display: flex; align-items: center; justify-content: space-between; padding: 0 3px 0 2px; flex: none; }
.arr-left { margin-left: 7px; border-top: 5px solid transparent; border-bottom: 5px solid transparent; border-right: 4px solid #868999; width: 0; height: 0; }
.hthumb { margin-left: 3px; width: 8px; height: 11px; background: #c2c3c9; }
.arr-right { margin-right: 12px; border-top: 5px solid transparent; border-bottom: 5px solid transparent; border-left: 5px solid #868999; width: 0; height: 0; }

/* Side panels */
.side { width: 348px; margin-left: 7px; flex: none; display: flex; flex-direction: column; }
.panel { background: #fff; border: 1px solid #8e9bbc; display: flex; flex-direction: column; }
.sol { height: 409px; flex: none; }
.panel-title { height: 20px; flex: none; display: flex; align-items: center; padding: 1px 6px 0 4px; gap: 6px; }
.panel-title.active { background: #fff29d; color: #1e1e1e; }
.panel-title.inactive { height: 21px; background: #4d6082; color: #fff; padding-top: 0; }
.ptools { height: 30px; flex: none; background: #cfd6e5; display: flex; align-items: center; padding-left: 8px; }
.pt2 { margin-left: 8px; }
.pt3 { margin-left: 6px; }
.pt-sep { margin-left: 7px; }
.pt4 { margin-left: 8px; }
.hl-btn { background: #fff29d; border: 1px solid #e5c365; display: flex; align-items: center; justify-content: center; flex: none; }
.hb1 { width: 21px; height: 28px; margin-left: 5px; }
.hb2 { width: 21px; height: 28px; margin-left: 4px; }
.hb3 { width: 22px; height: 22px; margin-left: -5px; }
.psearch { height: 22px; flex: none; display: flex; align-items: center; padding: 0 4px 0 5px; gap: 3px; background: #fff; color: #717171; border-bottom: 1px solid #cfd6e5; }
.tree { flex: 1; padding-top: 4px; letter-spacing: .1px; }
.node { height: 18px; display: flex; align-items: center; gap: 4px; white-space: nowrap; color: #1e1e1e; }
.node.l0 { padding-left: 13px; }
.node.l1 { padding-left: 12px; }
.node.l2 { padding-left: 48px; gap: 4px; }
.node.l3 { padding-left: 29px; }
.node.sel { background: #c9cede; }
.semibold { font-weight: 600; }
.tw-open { width: 0; height: 0; margin-right: 9px; border-bottom: 6px solid #333; border-left: 6px solid transparent; }
.tw-closed { width: 0; height: 0; margin-right: 10px; border-top: 5px solid transparent; border-bottom: 5px solid transparent; border-left: 5px solid #444; }
.sidetabs { height: 20px; flex: none; display: flex; color: #e7ebf2; }
.st { background: #3e5777; padding: 0 5px; line-height: 20px; white-space: nowrap; }
.st-on { background: #fff; color: #1e1e1e; border: 1px solid #8e9bbc; border-top: 0; width: 60px; line-height: 18px; }
.props { height: 310px; margin-top: 6px; flex: none; }
.pcombo { height: 25px; flex: none; display: flex; align-items: center; padding: 0 7px 2px 5px; font-size: 13px; gap: 6px; }
.pc-sub { font-size: 12px; }
.ptools-b { height: 25px; padding-left: 8px; }
.ts-tall { height: 20px; }
.pgroup { height: 22px; flex: none; background: #eeeef2; display: flex; align-items: center; gap: 7px; padding-left: 3px; font-weight: 500; }
.minus { width: 10px; height: 10px; border: 1px solid #222; background: linear-gradient(#222, #222) center / 6px 1px no-repeat; }
.prow { height: 19px; flex: none; display: flex; align-items: center; padding-left: 15px; background: linear-gradient(to right, #eeeef2 15px, #fff 15px); border-bottom: 1px solid #eeeef2; }
.pk { width: 152px; padding-left: 4px; height: 18px; border-right: 1px solid #eeeef2; flex: none; }
.pv { padding-left: 3px; white-space: nowrap; min-width: 0; }
.muted { color: #8a8a8a; }
.pblank { flex: 1; border-bottom: 1px solid #d0d3dc; }
.pdesc { height: 62px; flex: none; padding: 6px 0 0 6px; font-weight: 500; }

/* Status + task bar */
.statusbar { height: 23px; flex: none; background: #007acc; color: #fff; position: relative; display: flex; align-items: center; }
.st-ready { width: 1081px; }
.st-ln { width: 92px; }
.st-cl { width: 92px; }
.st-ch { width: 135px; }
.taskbar { height: 40px; flex: none; display: flex; align-items: center; background: linear-gradient(to right, #c2aa7b, #c6ae80 40%, #bfa97b 100%); border-top: 1px solid #d9c392; padding-left: 5px; }
.winlogo { margin-right: 13px; }
.tk { width: 60px; height: 39px; flex: none; margin-right: 2px; display: flex; align-items: center; justify-content: center; background: rgba(255, 255, 255, .2); border: 1px solid rgba(120, 100, 70, .55); border-bottom: 0; }
.tk2.on { background: rgba(255, 255, 255, .42); border: 1px solid #fff; }
.tk4, .tk7 { background: none; border-color: transparent; }
.tk6 { border: 2px solid #d8726a; }
.ppt-p { font-family: "Liberation Sans", sans-serif; font-size: 18px; font-weight: 700; fill: #fff; }
.tray { display: flex; align-items: center; color: #fff; padding-right: 20px; }
.tray-up { width: 0; height: 0; border-left: 5px solid transparent; border-right: 5px solid transparent; border-bottom: 5px solid #fff; }
.ime { margin-left: 13px; font-size: 15px; text-shadow: 0 0 1px #333; }
.ime-box { margin-left: 12px; width: 16px; height: 16px; background: #fff; color: #000; border: 1px solid #222; font-size: 12px; line-height: 14px; text-align: center; }
.clock { margin-left: 19px; width: 60px; display: flex; flex-direction: column; align-items: center; line-height: 17px; }

/* Explorer */
.explorer { position: absolute; left: 131px; top: 96px; width: 900px; height: 599px; background: #ebebeb; border: 1px solid #c8c8c8; padding: 0 7px 4px; display: flex; flex-direction: column; }
.ex-title { height: 28px; flex: none; display: flex; align-items: center; position: relative; padding-bottom: 3px; }
.q1 { margin-left: 1px; margin-top: 1px; }
.q-sep { width: 1px; height: 13px; background: #aaa; margin-left: 8px; }
.q-sep2 { margin-left: 11px; }
.q2 { margin-left: 5px; }
.q3 { margin-left: 9px; }
.q-drop { margin-left: 9px; width: 0; height: 0; border-left: 3px solid transparent; border-right: 3px solid transparent; border-top: 5px solid #111; }
.ex-name { flex: 1; text-align: center; font-size: 15px; letter-spacing: .15px; color: #444; margin-left: 32px; margin-right: 122px; white-space: nowrap; position: relative; left: -7px; }
.ex-win { position: absolute; right: 0; top: 0; display: flex; align-items: flex-start; gap: 16px; }
.ex-win svg { margin-top: 7px; }
.ex-close { width: 45px; height: 20px; background: #bdbdbd; display: flex; align-items: center; justify-content: center; margin-left: -10px; }
.ex-close svg { margin-top: 0; }
.ex-inner { flex: 1; background: #fff; border-bottom: 1px solid #d8d8d8; display: flex; flex-direction: column; min-height: 0; }
.ex-tabs { height: 25px; flex: none; display: flex; color: #444; align-items: stretch; position: relative; border-bottom: 1px solid #dadbdc; }
.ext { line-height: 27px; text-align: center; }
.ext-file { width: 56px; background: #1979ca; color: #fff; height: 24px; }
.ext-on { width: 52px; background: #fff; border: 1px solid #dadbdc; border-bottom: 0; height: 25px; }
.ext-a { margin-left: 15px; }
.ext-b { margin-left: 30px; }
.ex-chev { align-self: center; margin-right: 15px; }
.ex-help { align-self: center; width: 15px; height: 15px; border-radius: 50%; background: #1979ca; color: #fff; font-weight: 700; font-size: 12px; line-height: 15px; text-align: center; margin-right: 3px; }
.ribbon { height: 98px; flex: none; display: flex; background: #f5f6f7; border-bottom: 1px solid #e0e1e3; }
.rg { flex: none; display: flex; flex-direction: column; border-right: 1px solid #e0e1e3; }
.rg1 { width: 171px; }
.rg2 { width: 198px; }
.rg3 { width: 136px; }
.rg4 { width: 127px; }
.rg5 { width: 86px; }
.rg-body { flex: 1; display: flex; padding-top: 5px; min-height: 0; }
.rg1 .rg-body { padding-left: 5px; }
.rg2 .rg-body { padding-left: 4px; }
.rg3 .rg-body { padding-left: 4px; }
.rg4 .rg-body { padding-left: 5px; }
.rg5 .rg-body { padding-left: 8px; }
.rg-label { height: 22px; line-height: 26px; text-align: center; color: #8d8d8d; flex: none; }
.big { width: 42px; flex: none; display: flex; flex-direction: column; align-items: center; color: #3c3c3c; line-height: 16px; text-align: center; position: relative; }
.big svg { height: 32px; margin-bottom: 2px; margin-top: 4px; }
.off { color: #9a9a9a; }
.drop { width: 0; height: 0; border-left: 3px solid transparent; border-right: 3px solid transparent; border-top: 4px solid #333; margin-top: 1px; }
.rg-sep { width: 1px; height: 55px; background: #dedfe1; flex: none; margin: 3px 2px 0 5px; }
.b-ren { width: 54px; }
.smalls { display: flex; flex-direction: column; }
.s1 { margin-left: 5px; }
.s3 { margin-left: 4px; }
.s4 { margin-left: 5px; }
.sm { height: 23px; display: flex; align-items: center; gap: 3px; white-space: nowrap; color: #3c3c3c; }
.sm.off { color: #9a9a9a; }
.sm .caret { margin-left: 3px; }
.s5 .sm { gap: 5px; }
.addr { height: 37px; flex: none; display: flex; align-items: center; padding: 0 0 3px 9px; letter-spacing: .1px; }
.circ { width: 20px; height: 20px; border-radius: 50%; border: 1.500px solid #8a8a8a; display: flex; align-items: center; justify-content: center; flex: none; }
.c2 { margin-left: 9px; }
.cg-a { margin-left: 9px; }
.up { margin-left: 14px; }
.addrbox { width: 548px; height: 22px; margin-left: 12px; border: 1px solid #d9d9d9; display: flex; align-items: center; padding-left: 4px; color: #333; white-space: nowrap; flex: none; gap: 9px; }
.crumb { width: 0; height: 0; border-top: 3.500px solid transparent; border-bottom: 3.500px solid transparent; border-left: 4px solid #555; }
.ab-refresh { width: 25px; height: 20px; border-left: 1px solid #d9d9d9; display: flex; align-items: center; justify-content: center; margin-left: -3px; }
.searchbox { width: 202px; height: 22px; margin-left: 12px; border: 1px solid #d9d9d9; display: flex; align-items: center; padding: 0 8px; color: #808080; white-space: nowrap; flex: none; }
.ex-body { flex: 1; display: flex; min-height: 0; }
.navpane { width: 156px; flex: none; display: flex; position: relative; }
.navlist { width: 142px; flex: none; padding-top: 9px; white-space: nowrap; }
.nv { height: 21px; display: flex; align-items: center; padding-left: 31px; gap: 4px; color: #222; }
.nv.top { padding-left: 19px; }
.nv-blank { height: 21px; }
.xscroll { width: 15px; flex: none; background: #f0f0f0; display: flex; flex-direction: column; align-items: center; justify-content: space-between; padding: 6px 0; }
.xthumb { width: 15px; flex: 1; margin: 5px 0 39px; background: #cdcdcd; }
.listpane { flex: 1; display: flex; padding-left: 18px; min-width: 0; }
.list { flex: 1; min-width: 0; }
.lhead { height: 21px; display: flex; align-items: center; position: relative; color: #6d6d6d; padding-top: 4px; }
.lhead .c-name { padding-left: 4px; }
.sort { position: absolute; left: 123px; top: 1px; width: 5px; height: 3px; border-left: 3px solid transparent; border-right: 3px solid transparent; border-bottom: 3px solid #9aa5b2; }
.lr { height: 21px; width: 574px; display: flex; align-items: center; border: 1px solid transparent; border-left: 0; border-right: 0; padding-right: 4px; white-space: nowrap; }
.c-name { width: 264px; flex: none; display: flex; align-items: center; gap: 4px; padding-left: 4px; color: #222; }
.c-date { width: 120px; flex: none; color: #6d6d6d; }
.c-type { width: 120px; flex: none; color: #6d6d6d; }
.c-size { width: 66px; flex: none; text-align: right; color: #6d6d6d; }
.lhead .c-name, .lhead .c-date, .lhead .c-type, .lhead .c-size { color: #6d6d6d; }
.lhead .c-size { text-align: left; }
.lr-sel { background: #cce4fb; border: 1px solid #7ab4ea; }
.lr-sel .c-name { padding-left: 3px; }
.lthumb { margin: 28px 0 2px; }
.ex-status { height: 27px; flex: none; display: flex; align-items: center; padding: 0 4px 0 14px; color: #555; }
.es-sep { width: 1px; height: 13px; background: #e5e5e5; margin: 0 11px; }
.es-size { margin-left: 10px; }
.vbtn { width: 21px; height: 22px; display: flex; align-items: center; justify-content: center; flex: none; }
.vbtn-on { background: #cce8ff; border: 1px solid #3f9be8; }

/* Ink overlay */
.ink { position: absolute; left: 0; top: 0; pointer-events: none; }
.ink path { fill: none; stroke: #f00a0a; stroke-width: 2px; stroke-linecap: round; stroke-linejoin: round; }
.ink path.cursor { fill: #fff; stroke: #000; stroke-width: 1px; }
```
